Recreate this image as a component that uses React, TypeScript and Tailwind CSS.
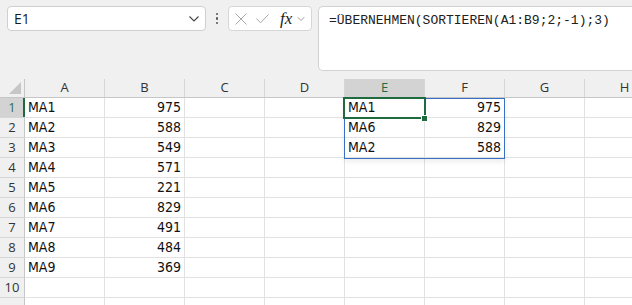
import React from "react";

const cols = ["A", "B", "C", "D", "E", "F", "G", "H"];

type Cell = { text: string; right?: boolean };

const data: Record<string, Cell> = {
  A1: { text: "MA1" }, B1: { text: "975", right: true },
  A2: { text: "MA2" }, B2: { text: "588", right: true },
  A3: { text: "MA3" }, B3: { text: "549", right: true },
  A4: { text: "MA4" }, B4: { text: "571", right: true },
  A5: { text: "MA5" }, B5: { text: "221", right: true },
  A6: { text: "MA6" }, B6: { text: "829", right: true },
  A7: { text: "MA7" }, B7: { text: "491", right: true },
  A8: { text: "MA8" }, B8: { text: "484", right: true },
  A9: { text: "MA9" }, B9: { text: "369", right: true },
  E1: { text: "MA1" }, F1: { text: "975", right: true },
  E2: { text: "MA6" }, F2: { text: "829", right: true },
  E3: { text: "MA2" }, F3: { text: "588", right: true },
};

const rows = [1, 2, 3, 4, 5, 6, 7, 8, 9, 10, 11];

const Chevron = ({ className }: { className?: string }) => (
  <svg width="10" height="6" viewBox="0 0 10 6" className={className}>
    <path d="M0.5 0.5 L5 5 L9.5 0.5" fill="none" stroke="currentColor" strokeWidth="1.1" />
  </svg>
);

const FormulaBar = () => (
  <div className="flex h-[79px] items-start pl-[7px] pt-[6px]">
    <div className="flex h-[25px] w-[199px] items-center justify-between rounded-[4px] border border-[#cfcfcf] bg-white pl-[6px] pr-[6px] text-[14px] text-[#1a1a1a] [font-family:'Open_Sans',sans-serif]">
      <span>E1</span>
      <Chevron className="text-[#444]" />
    </div>
    <div className="flex h-[25px] w-[22px] flex-col items-center justify-center gap-[2px]">
      <span className="h-[2.5px] w-[2.5px] rounded-full bg-[#555]" />
      <span className="h-[2.5px] w-[2.5px] rounded-full bg-[#555]" />
      <span className="h-[2.5px] w-[2.5px] rounded-full bg-[#555]" />
    </div>
    <div className="flex h-[25px] w-[84px] items-center rounded-[4px] border border-[#d6d6d6] bg-white pl-[6px]">
      <svg width="12" height="12" viewBox="0 0 12 12">
        <path d="M0.5 0.5 L11.5 11.5 M11.5 0.5 L0.5 11.5" stroke="#a8a8a8" strokeWidth="1" fill="none" />
      </svg>
      <svg width="13" height="10" viewBox="0 0 13 10" className="ml-[9px]">
        <path d="M0.5 4.5 L4.5 8.8 L12.5 0.5" stroke="#a8a8a8" strokeWidth="1" fill="none" />
      </svg>
      <span className="ml-[11px] text-[17px] italic leading-none text-[#222] [font-family:'Liberation_Serif',serif]">
        fx
      </span>
      <Chevron className="ml-[4px] scale-75 text-[#888]" />
    </div>
    <div className="ml-[6px] h-[65px] flex-1 rounded-l-[5px] border border-r-0 border-[#d2d2d2] bg-white pl-[10px] pt-[6px] text-[13px] leading-[16px] text-[#202020] [font-family:'Liberation_Mono',monospace]">
      =ÜBERNEHMEN(SORTIEREN(A1:B9;2;-1);3)
    </div>
  </div>
);

const Grid = () => (
  <div className="relative">
    <div className="grid grid-cols-[25px_repeat(8,80px)] grid-rows-[19px_repeat(11,20px)]">
      <div className="relative border-b border-r border-[#c6c6c6] bg-[#f0f0f0]">
        <svg width="12" height="12" viewBox="0 0 12 12" className="absolute bottom-[3px] right-[3px]">
          <path d="M12 0 L12 12 L0 12 Z" fill="#c6c6c6" />
        </svg>
      </div>
      {cols.map((c) => (
        <div
          key={c}
          className={`flex items-center justify-center border-b border-r border-b-[#c6c6c6] border-r-[#d6d6d6] text-[13px] [font-family:'Open_Sans',sans-serif] ${
            c === "E" ? "bg-[#d3d3d3] text-[#1d6b3e]" : "bg-[#f0f0f0] text-[#333]"
          }`}
        >
          {c}
        </div>
      ))}
      {rows.map((r) => (
        <React.Fragment key={r}>
          <div
            className={`relative flex items-center justify-center border-b border-r border-b-[#d6d6d6] border-r-[#c6c6c6] text-[13px] [font-family:'Open_Sans',sans-serif] ${
              r === 1 ? "bg-[#d3d3d3] text-[#2f6d5a]" : "bg-[#f0f0f0] text-[#333]"
            }`}
          >
            {r < 11 ? r : null}
            {r === 1 && <span className="absolute right-[-1px] top-0 h-full w-[2px] bg-[#1d6b3e]" />}
          </div>
          {cols.map((c) => {
            const cell = data[`${c}${r}`];
            return (
              <div
                key={c}
                className={`flex items-center overflow-hidden whitespace-nowrap border-b border-r border-[#e1e1e1] bg-white px-[3px] text-[14px] text-[#111] [font-family:'DejaVu_Sans_Condensed',sans-serif] ${
                  cell?.right ? "justify-end" : "justify-start"
                }`}
              >
                {cell?.text}
              </div>
            );
          })}
        </React.Fragment>
      ))}
    </div>
    <div className="pointer-events-none absolute left-[344px] top-[19px] h-[61px] w-[161px] border border-[#3a6fc6] shadow-[0_3px_5px_rgba(0,0,0,0.07)]" />
    <div className="pointer-events-none absolute left-[343px] top-[18px] h-[22px] w-[83px] border-2 border-[#1d6b3e]" />
    <div className="pointer-events-none absolute left-[421px] top-[36px] h-[7px] w-[7px] border border-white bg-[#1d6b3e]" />
  </div>
);

export default function App() {
  return (
    <div className="h-[305px] w-[632px] overflow-hidden bg-[#f0f0f0]">
      <FormulaBar />
      <Grid />
    </div>
  );
}
